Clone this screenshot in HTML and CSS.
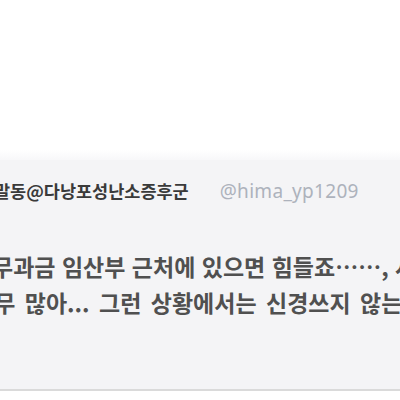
FILE: index.html
```html
<!DOCTYPE html>
<html lang="ko">
<head>
<meta charset="utf-8">
<link rel="stylesheet" href="styles.css">
</head>
<body>
<div class="page">
  <div class="top"></div>
  <section class="panel">
    <div class="header">
      <span class="name">말동@다낭포성난소증후군</span>
      <span class="handle">@hima_yp1209</span>
    </div>
    <div class="body">
      <p class="line l1">무과금 임산부 근처에 있으면 힘들죠……, 사</p>
      <p class="line l2">너무 많아... 그런 상황에서는 신경쓰지 않는다</p>
    </div>
  </section>
</div>
</body>
</html>
```
FILE: styles.css
```css
html, body {
  margin: 0;
  padding: 0;
  background: #ffffff;
}
.page {
  width: 400px;
  height: 400px;
  overflow: hidden;
  display: flex;
  flex-direction: column;
}
.top {
  height: 160px;
  background: linear-gradient(#ffffff 0, #ffffff 150px, #f6f6f8 162px);
}
.panel {
  height: 229px;
  background: #f4f4f6;
  border-bottom: 2px solid #dadada;
  display: flex;
  flex-direction: column;
  overflow: hidden;
}
.header {
  display: flex;
  align-items: baseline;
  gap: 31px;
  margin-top: 18px;
  margin-left: -6px;
  white-space: nowrap;
}
.name {
  font-family: "Noto Sans CJK KR", sans-serif;
  font-weight: 700;
  font-size: 17.5px;
  color: #3a3a3a;
}
.handle {
  font-family: "Noto Sans", sans-serif;
  font-size: 19px;
  color: #adb2bc;
  letter-spacing: 0.3px;
}
.body {
  margin-top: 44px;
  display: flex;
  flex-direction: column;
}
.line {
  margin: 0;
  white-space: nowrap;
  font-family: "Noto Sans CJK KR", sans-serif;
  font-weight: 700;
  font-size: 23px;
  line-height: 36px;
  color: #505050;
}
.l1 {
  margin-left: -8px;
}
.l2 {
  margin-left: -27px;
  word-spacing: 3px;
}
```
